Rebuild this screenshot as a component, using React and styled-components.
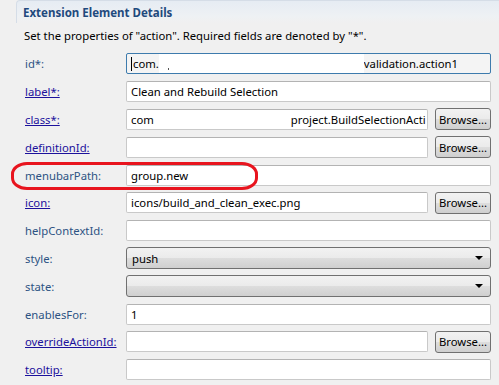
// External Dependencies
import React from 'react';
import styled, { createGlobalStyle } from 'styled-components';

// Local Variables
const GlobalStyle = createGlobalStyle`
  body {
    margin: 0;
    background: #f0f0f0;
    font-family: "Noto Sans", "Open Sans", sans-serif;
    font-size: 11.3px;
  }
`;

const Page = styled.div`
  position: relative;
  width: 499px;
  height: 385px;
  overflow: hidden;
  background: #f0f0f0;
`;

const Header = styled.div`
  margin-left: 16px;
  height: 22px;
  padding-left: 6px;
  display: flex;
  align-items: center;
  border: 1px solid #d5dde7;
  border-bottom: none;
  border-right: none;
  border-top-left-radius: 4px;
  background: linear-gradient(#e6ecf3, #eef1f4 70%, #f0f0f0);
  color: #1f4a7d;
  font-weight: bold;
  font-size: 11.5px;
`;

const Description = styled.p`
  margin: 4px 0 0 24px;
  line-height: 18px;
  color: #000;
`;

const Form = styled.div`
  display: grid;
  grid-template-columns: 101px minmax(0, 1fr);
  grid-auto-rows: 27.8px;
  margin: 5px 8px 0 25px;
  align-items: center;
`;

const Label = styled.span`
  color: ${p => (p.link ? '#1c119c' : '#2d5383')};
  text-decoration: ${p => (p.link ? 'underline' : 'none')};
  white-space: nowrap;
`;

const Field = styled.div`
  display: flex;
  align-items: center;
  gap: 7px;
  min-width: 0;
`;

const Input = styled.div`
  flex: 1;
  min-width: 0;
  height: 19px;
  display: flex;
  align-items: center;
  padding-left: 4px;
  border: 1px solid ${p => (p.focused ? '#3d7bad' : '#c9c9c9')};
  border-top-color: ${p => (p.focused ? '#3d7bad' : '#b3b3b3')};
  border-radius: 2px;
  background: ${p => (p.focused ? '#f4f4f4' : '#fff')};
  color: #000;
  white-space: nowrap;
  overflow: hidden;
`;

const Caret = styled.span`
  display: inline-block;
  width: 1px;
  height: 14px;
  background: #000;
  margin-right: 1px;
`;

const Blank = styled.span`
  display: inline-block;
  flex: none;
  align-self: stretch;
  width: ${p => p.w}px;
  background: #fff;
  position: relative;
`;

const Dot = styled.span`
  position: absolute;
  left: ${p => p.x}px;
  bottom: 3px;
  width: 1px;
  height: 2px;
  background: #555;
`;

const Combo = styled.div`
  flex: 1;
  min-width: 0;
  height: 20px;
  display: flex;
  align-items: center;
  padding: 0 7px 0 5px;
  border: 1px solid #707070;
  border-radius: 3px;
  background: linear-gradient(#f2f2f2, #ebebeb 48%, #dddddd 52%, #cfcfcf);
  color: #000;
`;

const ComboText = styled.span`
  flex: 1;
`;

const Arrow = styled.span`
  width: 0;
  height: 0;
  border-left: 4px solid transparent;
  border-right: 4px solid transparent;
  border-top: 4px solid #000;
`;

const Button = styled.div`
  flex: none;
  width: 54px;
  height: 20px;
  display: flex;
  align-items: center;
  justify-content: center;
  border: 1px solid #707070;
  border-radius: 3px;
  background: linear-gradient(#f2f2f2, #ebebeb 48%, #dddddd 52%, #cfcfcf);
  color: #000;
`;

const Annotation = styled.div`
  position: absolute;
  left: 11px;
  top: 162px;
  width: 241px;
  height: 22px;
  border: 3px solid #e8141e;
  border-radius: 16px / 12px;
  pointer-events: none;
`;

const rows = [
  { label: 'id*:', kind: 'id' },
  { label: 'label*:', link: true, value: 'Clean and Rebuild Selection' },
  { label: 'class*:', link: true, kind: 'class', browse: true },
  { label: 'definitionId:', link: true, value: '', browse: true },
  { label: 'menubarPath:', value: 'group.new' },
  { label: 'icon:', link: true, value: 'icons/build_and_clean_exec.png', browse: true },
  { label: 'helpContextId:', value: '' },
  { label: 'style:', combo: true, value: 'push' },
  { label: 'state:', combo: true, value: '' },
  { label: 'enablesFor:', value: '1' },
  { label: 'overrideActionId:', link: true, value: '', browse: true },
  { label: 'tooltip:', link: true, value: '' }
];

function renderControl(row) {
  if (row.combo) {
    return (
      <Combo>
        <ComboText>{row.value}</ComboText>
        <Arrow />
      </Combo>
    );
  }
  if (row.kind === 'id') {
    return (
      <Input focused>
        <Caret />
        com.
        <Blank w={205}>
          <Dot x={9} />
        </Blank>
        validation.action1
      </Input>
    );
  }
  if (row.kind === 'class') {
    return (
      <Input>
        com
        <Blank w={137} />
        project.BuildSelectionActi
      </Input>
    );
  }
  return <Input>{row.value}</Input>;
}

// Component Definition
function App() {
  return (
    <Page>
      <GlobalStyle />
      <Header>Extension Element Details</Header>
      <Description>
        Set the properties of "action". Required fields are denoted by "*".
      </Description>
      <Form>
        {rows.map(row => (
          <React.Fragment key={row.label}>
            <Label link={row.link}>{row.label}</Label>
            <Field>
              {renderControl(row)}
              {row.browse && <Button>Browse...</Button>}
            </Field>
          </React.Fragment>
        ))}
      </Form>
      <Annotation />
    </Page>
  );
}

export default App;
